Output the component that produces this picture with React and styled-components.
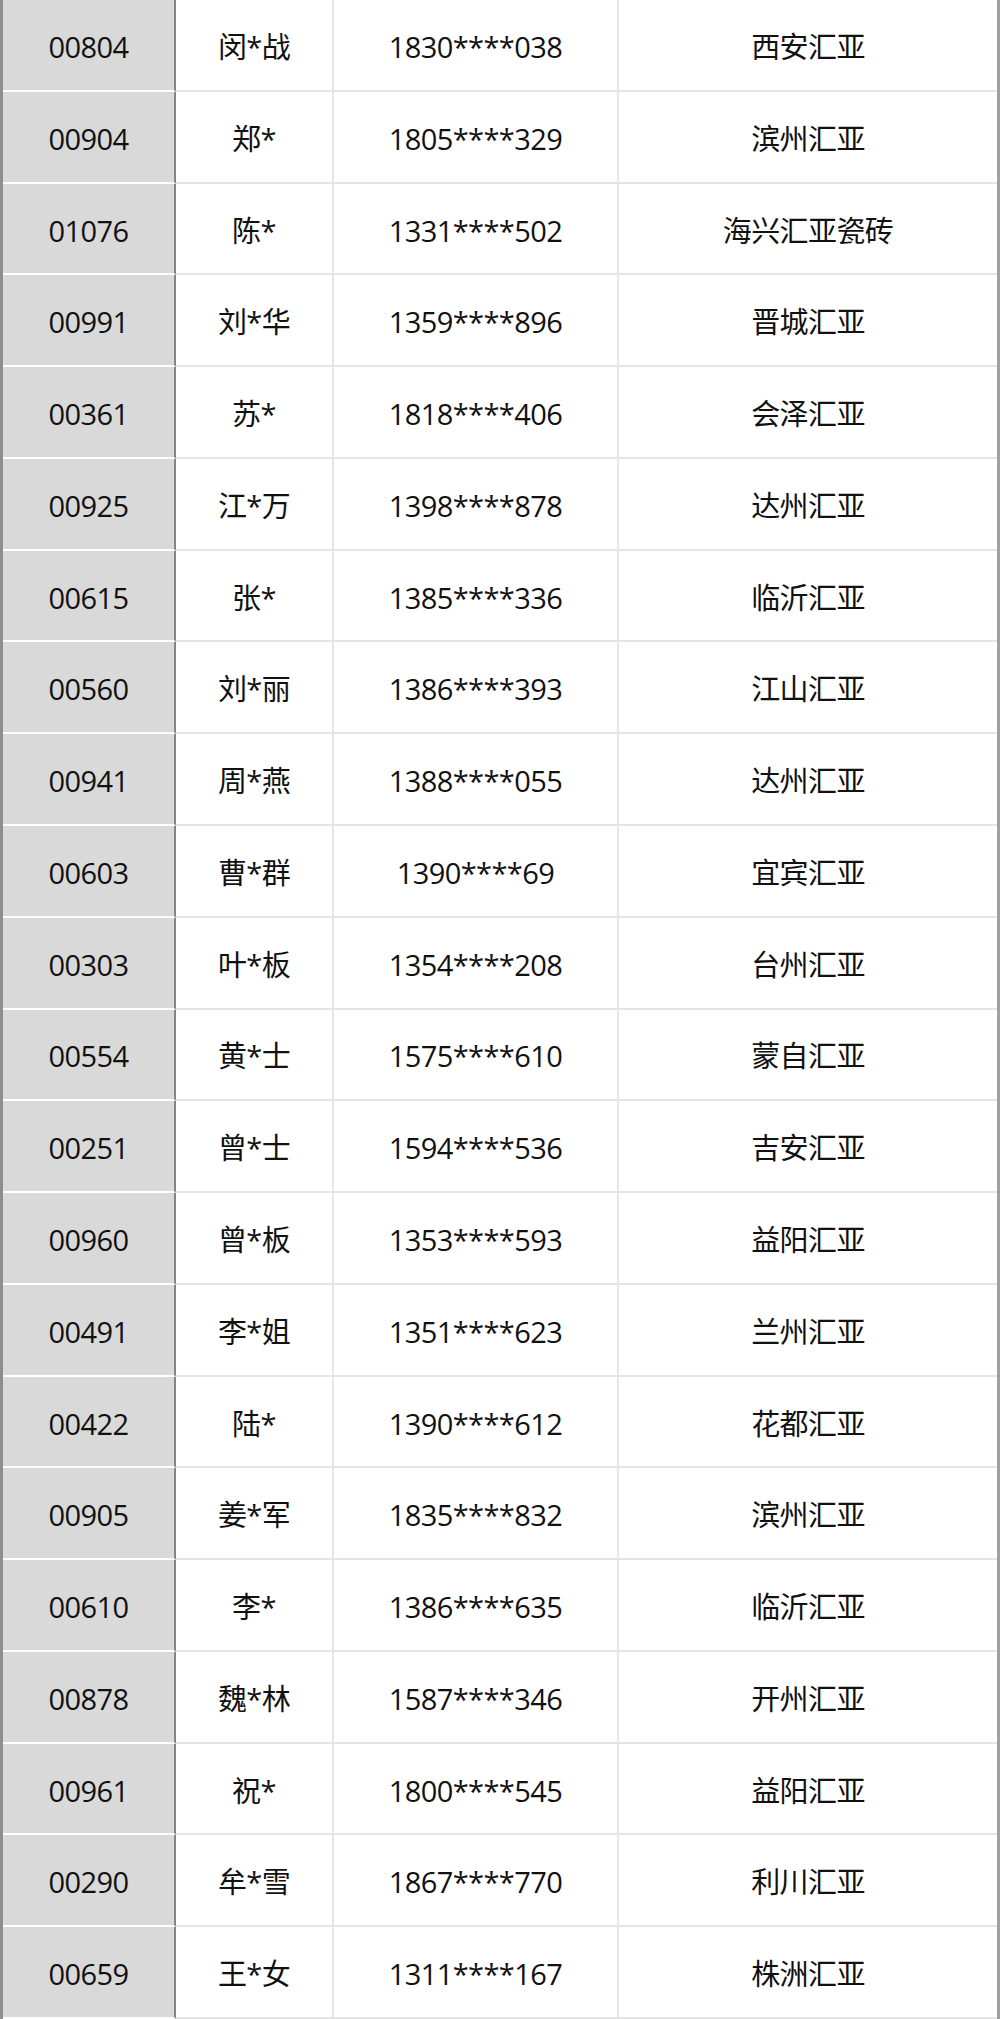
import React from "react";
import styled, { createGlobalStyle } from "styled-components";

const Global = createGlobalStyle`
  html, body { margin: 0; padding: 0; background: #fff; }
  body { font-family: "Open Sans", "Noto Sans CJK SC", sans-serif; }
`;

const rows = [
  ["00804", "闵*战", "1830****038", "西安汇亚"],
  ["00904", "郑*", "1805****329", "滨州汇亚"],
  ["01076", "陈*", "1331****502", "海兴汇亚瓷砖"],
  ["00991", "刘*华", "1359****896", "晋城汇亚"],
  ["00361", "苏*", "1818****406", "会泽汇亚"],
  ["00925", "江*万", "1398****878", "达州汇亚"],
  ["00615", "张*", "1385****336", "临沂汇亚"],
  ["00560", "刘*丽", "1386****393", "江山汇亚"],
  ["00941", "周*燕", "1388****055", "达州汇亚"],
  ["00603", "曹*群", "1390****69", "宜宾汇亚"],
  ["00303", "叶*板", "1354****208", "台州汇亚"],
  ["00554", "黄*士", "1575****610", "蒙自汇亚"],
  ["00251", "曾*士", "1594****536", "吉安汇亚"],
  ["00960", "曾*板", "1353****593", "益阳汇亚"],
  ["00491", "李*姐", "1351****623", "兰州汇亚"],
  ["00422", "陆*", "1390****612", "花都汇亚"],
  ["00905", "姜*军", "1835****832", "滨州汇亚"],
  ["00610", "李*", "1386****635", "临沂汇亚"],
  ["00878", "魏*林", "1587****346", "开州汇亚"],
  ["00961", "祝*", "1800****545", "益阳汇亚"],
  ["00290", "牟*雪", "1867****770", "利川汇亚"],
  ["00659", "王*女", "1311****167", "株洲汇亚"],
];

const Sheet = styled.div`
  width: 1000px;
  height: 2019px;
  box-sizing: border-box;
  border-left: 3px solid #8e8e8e;
  border-right: 3px solid #a0a0a0;
  display: grid;
  grid-template-rows: repeat(22, 1fr);
  overflow: hidden;
`;

const Row = styled.div`
  display: grid;
  grid-template-columns: 173px 158px 285px 1fr;
  min-height: 0;
`;

const Cell = styled.div`
  box-sizing: border-box;
  display: flex;
  align-items: center;
  justify-content: center;
  font-size: 29px;
  letter-spacing: -0.6px;
  line-height: 1.2;
  color: #111;
  white-space: nowrap;
  padding-top: 5px;
  background: ${(p) => (p.$head ? "#d9d9d9" : "#fff")};
  border-bottom: 2px solid ${(p) => (p.$head ? "#ffffff" : "#e4e4e4")};
  border-right: ${(p) =>
    p.$head ? "2px solid #858585" : p.$last ? "0" : "2px solid #e6e6e6"};
`;

export default function App() {
  return (
    <>
      <Global />
      <Sheet>
        {rows.map((r) => (
          <Row key={r[0]}>
            <Cell $head>{r[0]}</Cell>
            <Cell>{r[1]}</Cell>
            <Cell>{r[2]}</Cell>
            <Cell $last>{r[3]}</Cell>
          </Row>
        ))}
      </Sheet>
    </>
  );
}
